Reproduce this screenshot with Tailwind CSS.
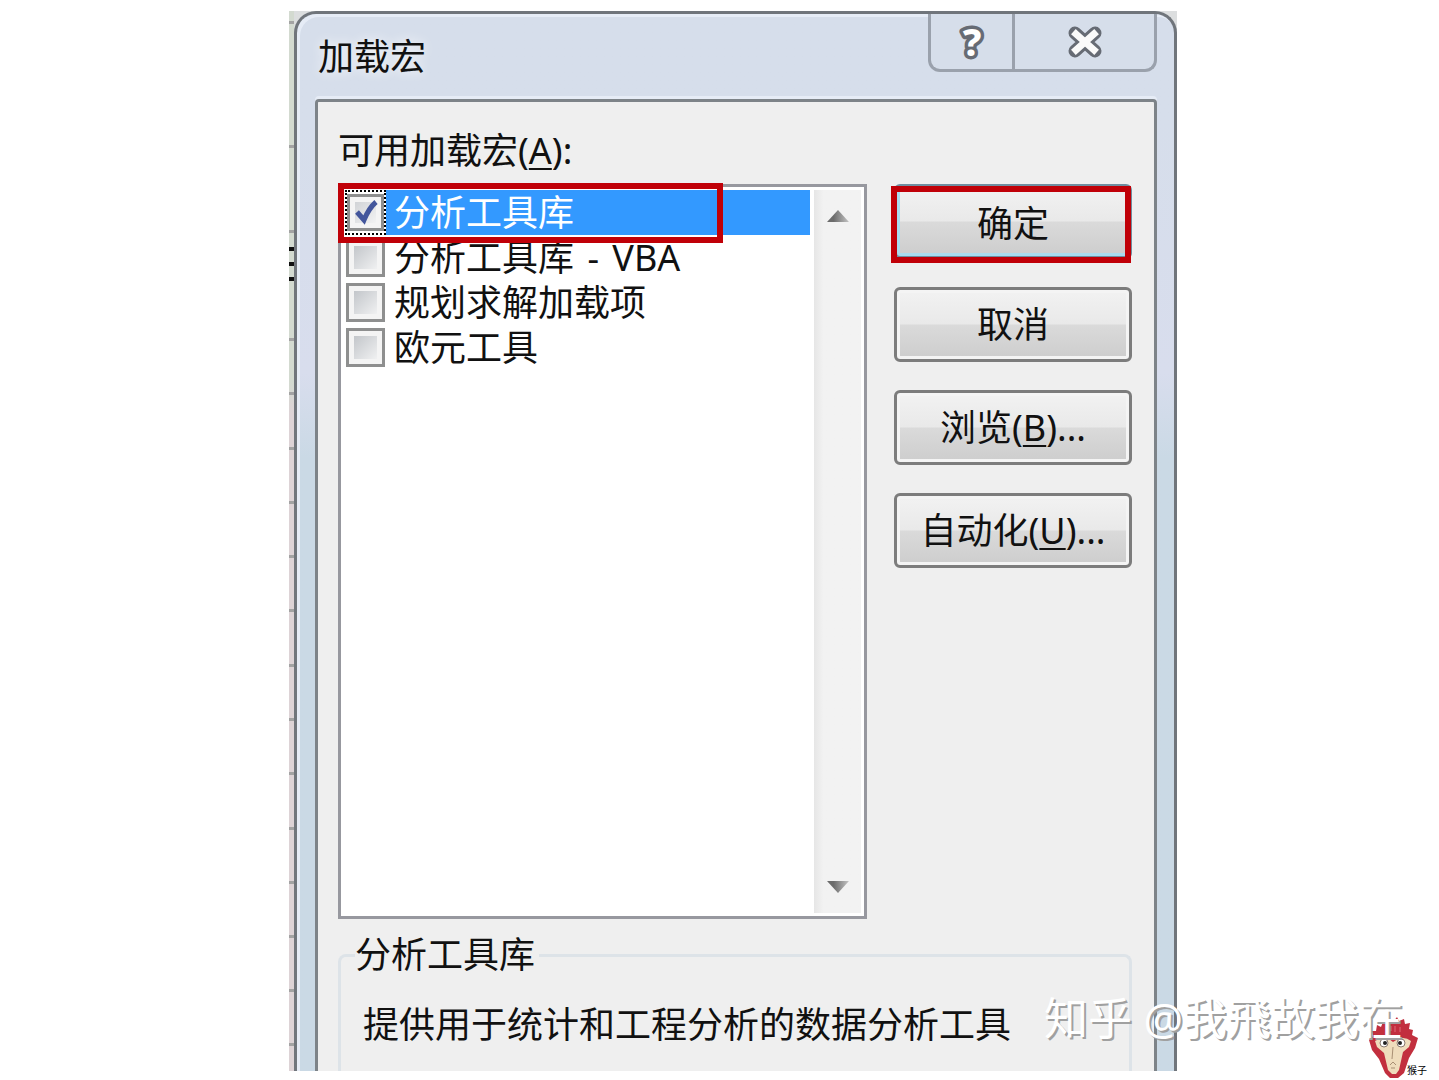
<!DOCTYPE html>
<html lang="zh-CN">
<head>
    <meta charset="UTF-8">
    <meta name="viewport" content="width=device-width, initial-scale=1.0">
    <script src="https://cdn.jsdelivr.net/npm/@tailwindcss/browser@4"></script>
    <title>加载宏</title>
</head>
<body class="bg-white font-['Noto_Sans','Noto_Sans_CJK_SC',sans-serif] text-4xl leading-9 text-[#111]">

    <main class="relative flex min-h-screen overflow-hidden pt-[11px] pr-[262px] pb-[9px] pl-[289px]">

        <!-- sheet edge behind the dialog -->
        <div class="w-[5px] shrink-0 bg-linear-to-b from-[#d3dad0] from-35% to-[#ddd3d6] to-38%">
            <svg class="h-full w-full" aria-hidden="true">
                <g fill="#a3a3a3">
                    <rect y="10" width="5" height="3"/>
                    <rect y="134" width="5" height="3"/>
                    <rect y="219" width="5" height="3"/>
                    <rect y="327" width="5" height="3"/>
                    <rect y="381" width="5" height="3"/>
                    <rect y="436" width="5" height="3"/>
                    <rect y="490" width="5" height="3"/>
                    <rect y="544" width="5" height="3"/>
                    <rect y="598" width="5" height="3"/>
                    <rect y="653" width="5" height="3"/>
                    <rect y="707" width="5" height="3"/>
                    <rect y="761" width="5" height="3"/>
                    <rect y="816" width="5" height="3"/>
                    <rect y="870" width="5" height="3"/>
                    <rect y="924" width="5" height="3"/>
                    <rect y="978" width="5" height="3"/>
                    <rect y="1032" width="5" height="3"/>
                </g>
                <g fill="#111">
                    <rect y="236" width="5" height="4"/>
                    <rect y="251" width="5" height="4"/>
                    <rect y="266" width="5" height="4"/>
                </g>
            </svg>
        </div>

        <!-- dialog -->
        <div class="min-w-0 flex-1 bg-[#dcdedf]">
        <section class="flex h-full flex-col rounded-t-[22px] border-x-3 border-t-3 border-[#70757b] bg-linear-to-b from-[#d6deeb] from-10% via-[#d8dded] via-34% to-[#cad9e5] to-42% pr-[17px] pl-[18px] shadow-[inset_3px_3px_0_#e6ecf6]">

            <header class="flex h-[85px] justify-between">
                <h1 class="pt-[25px] pl-[3px] [text-shadow:0_0_12px_#fff]">加载宏</h1>
                <div class="flex h-[58px] rounded-b-xl border-x-3 border-b-3 border-[#9aa1ac] bg-[#d6deea]">
                    <button type="button" aria-label="帮助" class="flex w-[84px] justify-center border-r-3 border-[#9aa1ac]">
                        <svg class="h-[55px] w-10" viewBox="0 0 40 55" aria-hidden="true">
                            <text x="20" y="42" text-anchor="middle" font-family="Noto Sans" font-weight="800" font-size="38" fill="#fff" stroke="#666b74" stroke-width="7" stroke-linejoin="round" paint-order="stroke">?</text>
                        </svg>
                    </button>
                    <button type="button" aria-label="关闭" class="flex w-[139px] justify-center">
                        <svg class="mt-2 h-10 w-10" viewBox="0 0 40 40" fill="none" aria-hidden="true">
                            <path d="M10 11 30 29M30 11 10 29" stroke="#666b74" stroke-width="13" stroke-linecap="round"/>
                            <path d="M11 12 29 28M29 12 11 28" stroke="#fafafa" stroke-width="7" stroke-linecap="square"/>
                        </svg>
                    </button>
                </div>
            </header>

            <div class="flex flex-1 flex-col rounded-t-sm border-x-3 border-t-3 border-[#7d8388] bg-[#efefef] pr-[22px] pl-5 shadow-[0_-3px_0_#e6ecf6]">
                <h2 class="flex h-[82px] items-center pt-4">可用加载宏(<u class="decoration-2 underline-offset-4">A</u>):</h2>

                <div class="flex flex-1 gap-[27px]">
                    <div class="relative flex flex-1 border-3 border-[#97989f] bg-white py-[3px] pr-[3px] pl-1">
                        <div class="flex-1">
                            <label class="flex h-[45px] items-center">
                                <span class="relative flex h-[45px] w-[41px] items-center border-2 border-dotted border-black">
                                    <input type="checkbox" checked class="h-[37px] w-[37px] appearance-none border-3 border-[#8e8f8f] bg-linear-to-br from-[#c9ccd0] to-[#fafafa] shadow-[inset_0_0_0_5px_#f4f4f4]">
                                    <svg class="pointer-events-none absolute top-1 left-1 h-8 w-8" viewBox="0 0 32 32" fill="none" stroke="#43569c" stroke-width="5" aria-hidden="true">
                                        <path d="M6 16 13 24Q18 12 25 6"/>
                                    </svg>
                                </span>
                                <span class="h-[45px] flex-1 bg-[#3399ff] pl-2 leading-[45px] text-white">分析工具库</span>
                            </label>
                            <label class="flex h-[45px] items-center">
                                <input type="checkbox" class="ml-px h-[39px] w-[39px] appearance-none border-3 border-[#8e8f8f] bg-linear-to-br from-[#b9bdc2] to-[#fafafa] shadow-[inset_0_0_0_5px_#f4f4f4]">
                                <span class="flex-1 pl-[9px]">分析工具库 <span class="px-1">-</span> VBA</span>
                            </label>
                            <label class="flex h-[45px] items-center">
                                <input type="checkbox" class="ml-px h-[39px] w-[39px] appearance-none border-3 border-[#8e8f8f] bg-linear-to-br from-[#b9bdc2] to-[#fafafa] shadow-[inset_0_0_0_5px_#f4f4f4]">
                                <span class="flex-1 pl-[9px]">规划求解加载项</span>
                            </label>
                            <label class="flex h-[45px] items-center">
                                <input type="checkbox" class="ml-px h-[39px] w-[39px] appearance-none border-3 border-[#8e8f8f] bg-linear-to-br from-[#b9bdc2] to-[#fafafa] shadow-[inset_0_0_0_5px_#f4f4f4]">
                                <span class="flex-1 pl-[9px]">欧元工具</span>
                            </label>
                        </div>

                        <!-- scrollbar -->
                        <div class="ml-1 flex w-[47px] flex-col items-center justify-between bg-linear-to-r from-[#e6e6e6] to-[#f2f2f2] to-20% py-5">
                            <button type="button" aria-label="向上滚动">
                                <svg class="h-3 w-6" viewBox="0 0 24 12" aria-hidden="true">
                                    <defs><linearGradient id="arrow"><stop offset=".3" stop-color="#6c6c6c"/><stop offset="1" stop-color="#c4c4c4"/></linearGradient></defs>
                                    <path d="M12 0 23 12H1Z" fill="url(#arrow)"/>
                                </svg>
                            </button>
                            <button type="button" aria-label="向下滚动">
                                <svg class="h-3 w-6" viewBox="0 0 24 12" aria-hidden="true">
                                    <path d="M1 0H23L12 12Z" fill="url(#arrow)"/>
                                </svg>
                            </button>
                        </div>

                        <!-- red marker round the first item -->
                        <div class="pointer-events-none absolute -top-1 -left-[3px] h-[60px] w-[385px] border-6 border-[#c00008]"></div>
                    </div>

                    <div class="flex w-[238px] flex-col gap-7">
                        <div class="relative">
                            <button type="button" class="h-[75px] w-full rounded-md border-3 border-[#6f8ea0] bg-[linear-gradient(#f2f2f2,#e9e9e9_49%,#dadada_51%,#cdcdcd)] pt-1 shadow-[inset_0_0_0_3px_#a9dcef]">确定</button>
                            <div class="pointer-events-none absolute top-0.5 right-px -left-[3px] h-[77px] border-6 border-[#c00008]"></div>
                        </div>
                        <button type="button" class="h-[75px] rounded-md border-3 border-[#7c7c7c] bg-[linear-gradient(#f2f2f2,#e9e9e9_49%,#dadada_51%,#cdcdcd)] shadow-[inset_0_0_0_3px_#f4f4f4]">取消</button>
                        <button type="button" class="h-[75px] rounded-md border-3 border-[#7c7c7c] bg-[linear-gradient(#f2f2f2,#e9e9e9_49%,#dadada_51%,#cdcdcd)] shadow-[inset_0_0_0_3px_#f4f4f4]">浏览(<u class="decoration-2 underline-offset-4">B</u>)...</button>
                        <button type="button" class="h-[75px] rounded-md border-3 border-[#7c7c7c] bg-[linear-gradient(#f2f2f2,#e9e9e9_49%,#dadada_51%,#cdcdcd)] shadow-[inset_0_0_0_3px_#f4f4f4]">自动化(<u class="decoration-2 underline-offset-4">U</u>)...</button>
                    </div>
                </div>

                <fieldset class="mt-[18px] h-[134px] rounded-t-lg border-x-3 border-t-3 border-[#dde3e8] pl-[22px]">
                    <legend class="-ml-2 pr-1">分析工具库</legend>
                    <p class="pt-[34px]">提供用于统计和工程分析的数据分析工具</p>
                </fieldset>
            </div>
        </section>
        </div>

        <!-- corner mark -->
        <div class="absolute right-2 bottom-0 h-16 w-16">
            <svg class="absolute top-0 left-0 h-16 w-14" viewBox="0 0 56 64" aria-hidden="true">
                <path d="M2 24 6 20 5 15 9 15 10 9 14 11 16 6 20 8 23 3 26 6 30 1 32 5 37 3 38 8 43 7 42 13 46 14 45 19 51 22 48 32 42 42 37 57 31 62H23L18 57 12 43 5 34Z" fill="#c22f3e"/>
                <path d="M8 25Q15 20 22 23L26 26 31 23Q38 20 44 25L42 31 36 36 32 54 29 58H25L21 54 17 37 10 31Z" fill="#efdcbc"/>
                <path d="M20 11V16M24 10V15M28 10V16M33 11V16" stroke="#df6a76"/>
                <circle cx="17" cy="27" r="4" fill="#fff" stroke="#8a7a70"/>
                <circle cx="34" cy="27" r="4" fill="#fff" stroke="#8a7a70"/>
                <circle cx="18" cy="27" r="2" fill="#222"/>
                <circle cx="33" cy="27" r="2" fill="#222"/>
                <path d="M26 31 25 43M23 49 26 46 29 49M24 52H28" fill="none" stroke="#a98f74"/>
            </svg>
            <span class="absolute right-1 bottom-1 text-[10px] leading-3 text-black">猴子</span>
        </div>
        <p class="absolute right-9 bottom-9 text-[44px] leading-[52px] whitespace-nowrap text-white [text-shadow:2px_2px_0_#a0a0a0]">知乎 @我飛故我在</p>
    </main>

</body>
</html>
